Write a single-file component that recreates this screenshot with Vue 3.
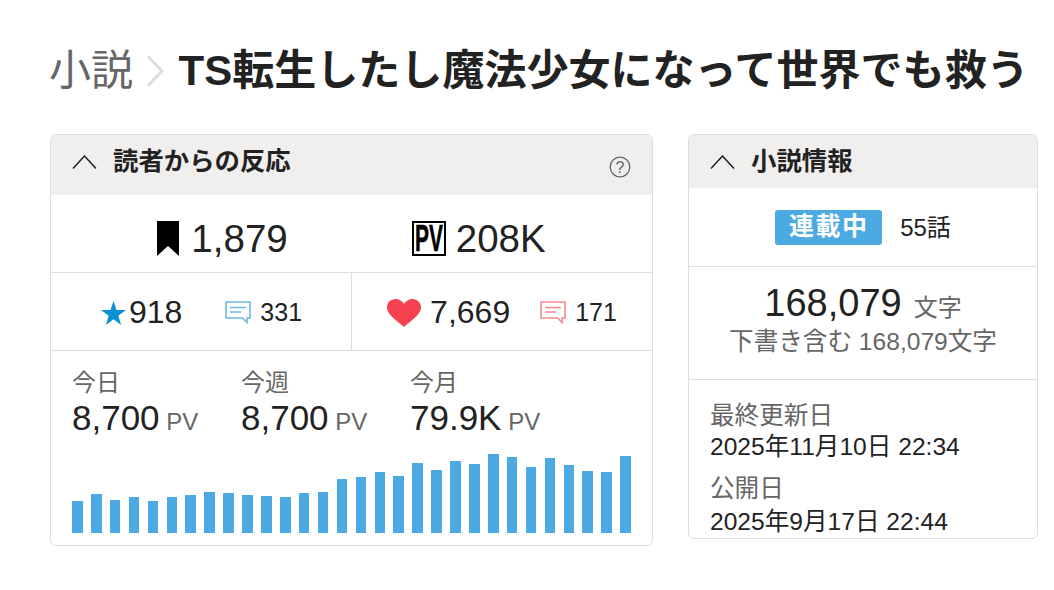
<template>
  <div class="page">
    <h1 class="page-title">
      <span class="crumb">小説</span>
      <svg class="crumb-arrow" width="18" height="32" viewBox="0 0 18 32"><path d="M2 1.5 16 16 2 30.5" fill="none" stroke="#ddd" stroke-width="3" /></svg>
      <span class="novel-name">TS転生したし魔法少女になって世界でも救う</span>
    </h1>

    <div class="columns">
      <section class="card reaction-card">
        <header class="card-header reaction-header">
          <svg class="chevron" width="25" height="14" viewBox="0 0 25 14"><path d="M1 13.5 12.500 1 24 13.500" fill="none" stroke="#222" stroke-width="1.500" /></svg>
          <h2 class="card-title">読者からの反応</h2>
          <svg class="help" width="22" height="22" viewBox="0 0 22 22">
            <circle cx="11" cy="11" r="9.800" fill="none" stroke="#666" stroke-width="1.300" />
            <text x="11" y="16.500" text-anchor="middle" class="help-mark">?</text>
          </svg>
        </header>

        <div class="totals">
          <div class="total">
            <svg width="22" height="35" viewBox="0 0 22 35"><path d="M0 0H22V35L11 25 0 35Z" fill="#000" /></svg>
            <span>1,879</span>
          </div>
          <div class="total pv-total">
            <span class="pv-badge"><span>PV</span></span>
            <span>208K</span>
          </div>
        </div>

        <div class="scores">
          <div class="score">
            <svg width="25" height="24" viewBox="0 0 26 25"><path d="M13 0 16.100 9.400H26L18 15.300 21 25 13 19 5 25 8 15.300 0 9.400H9.900Z" fill="#0a90d0" /></svg>
            <span class="score-num">918</span>
            <span class="comments">
              <svg width="26" height="23" viewBox="0 0 26 23">
                <path d="M1 1H25V17H22V21.500L17.500 17H1Z" fill="none" stroke="#6cb8e6" stroke-width="1.600" />
                <path d="M5 6.500H21M5 11H16" stroke="#6cb8e6" stroke-width="1.400" />
              </svg>
              331
            </span>
          </div>
          <div class="score">
            <svg width="34" height="28" viewBox="0 0 34 28"><path d="M17 28C13 24 0 16 0 8.500 0 3.500 4 0 8.500 0 12 0 15.500 2 17 5 18.500 2 22 0 25.500 0 30 0 34 3.500 34 8.500 34 16 21 24 17 28Z" fill="#f5404f" /></svg>
            <span class="score-num heart-num">7,669</span>
            <span class="comments">
              <svg width="26" height="23" viewBox="0 0 26 23">
                <path d="M1 1H25V17H22V21.500L17.500 17H1Z" fill="none" stroke="#f58a8f" stroke-width="1.600" />
                <path d="M5 6.500H21M5 11H16" stroke="#f58a8f" stroke-width="1.400" />
              </svg>
              171
            </span>
          </div>
        </div>

        <div class="pv-block">
          <div class="pv-stats">
            <div v-for="stat in pvStats" :key="stat.label" class="pv-stat">
              <div class="pv-label">{{ stat.label }}</div>
              <div class="pv-value">{{ stat.value }}<small> PV</small></div>
            </div>
          </div>
          <div class="chart">
            <div v-for="(h, i) in bars" :key="i" class="bar" :style="{ height: h + 'px' }"></div>
          </div>
        </div>
      </section>

      <section class="card info-card">
        <header class="card-header info-header">
          <svg class="chevron" width="25" height="14" viewBox="0 0 25 14"><path d="M1 13.5 12.500 1 24 13.500" fill="none" stroke="#222" stroke-width="1.500" /></svg>
          <h2 class="card-title">小説情報</h2>
        </header>

        <div class="status-row">
          <span class="status-badge">連載中</span>
          <span>55話</span>
        </div>

        <div class="length-row">
          <div class="length"><strong>168,079</strong><span>文字</span></div>
          <div class="draft">下書き含む 168,079文字</div>
        </div>

        <div class="dates">
          <div class="date-label">最終更新日</div>
          <div class="date-value">2025年11月10日 22:34</div>
          <div class="date-label second">公開日</div>
          <div class="date-value last">2025年9月17日 22:44</div>
        </div>
      </section>
    </div>
  </div>
</template>

<script setup>
const pvStats = [
  { label: '今日', value: '8,700' },
  { label: '今週', value: '8,700' },
  { label: '今月', value: '79.9K' }
];

// 直近30日の棒の高さ
const bars = [32, 39, 33, 36, 32, 36, 38, 41, 40, 38, 37, 36, 40, 41, 54, 56, 61, 57, 70, 63, 72, 69, 79, 76, 66, 75, 68, 62, 61, 77];
</script>

<style>
html, body { margin: 0; background: #fff; }
</style>

<style scoped>
.page { width: 1054px; height: 590px; overflow: hidden; box-sizing: border-box; padding: 46px 16px 0 50px; color: #222; font-family: "Liberation Sans", "Noto Sans CJK JP", sans-serif; }

.page-title { display: flex; align-items: center; margin: 0; height: 50px; font-size: 42px; line-height: 50px; font-weight: 400; white-space: nowrap; }
.crumb { color: #666; margin-left: -1px; }
.crumb-arrow { margin: 0 14.500px 0 13px; flex: none; }
.novel-name { font-weight: 700; font-size: 42.040px; }

.columns { display: flex; align-items: flex-start; gap: 35px; margin-top: 38px; }
.card { box-sizing: border-box; border: 1px solid #ddd; border-radius: 6px; overflow: hidden; background: #fff; }
.reaction-card { width: 603px; height: 412px; }
.info-card { width: 350px; height: 405px; }

.card-header { display: flex; background: #f1efee; padding-left: 20.500px; position: relative; box-sizing: border-box; padding-top: 12px; }
.reaction-header { height: 60px; }
.info-header { height: 53px; }
.card-title { margin: 0 0 0 16.500px; font-size: 25.400px; line-height: 28px; font-weight: 700; }
.chevron { margin-top: 8px; }
.help { position: absolute; right: 21px; top: 21px; }
.help-mark { font-size: 16px; fill: #666; }

.totals { display: flex; justify-content: center; gap: 124px; box-sizing: border-box; height: 78px; padding-top: 10px; align-items: center; border-bottom: 1px solid #ddd; font-size: 38.500px; }
.total { display: flex; align-items: center; gap: 12px; }
.pv-total { gap: 10px; }
.pv-badge { display: flex; align-items: center; justify-content: center; box-sizing: border-box; width: 34px; height: 35px; border: 2px solid #000; }
.pv-badge span { flex: none; font-size: 36px; line-height: 31px; font-weight: 700; color: #000; transform: scaleX(.58); -webkit-text-stroke: .6px #000; }

.scores { display: flex; box-sizing: border-box; height: 78px; border-bottom: 1px solid #ddd; }
.score { box-sizing: border-box; flex: 1; display: flex; align-items: center; justify-content: center; padding-top: 2px; }
.score:first-child { flex: none; width: 300px; padding-left: 1px; }
.score + .score { border-left: 1px solid #ddd; }
.score-num { font-size: 32px; margin-left: 3px; }
.heart-num { margin-left: 9px; }
.comments { display: flex; align-items: center; gap: 9px; margin-left: 43px; font-size: 25px; }
.comments svg { flex: none; }
.heart-num + .comments { margin-left: 30px; }

.pv-block { padding: 18px 21px 0; }
.pv-stats { display: flex; }
.pv-stat { width: 169px; }
.pv-label { font-size: 24px; line-height: 28px; color: #666; }
.pv-value { font-size: 35px; line-height: 42px; white-space: nowrap; }
.pv-value small { font-size: 24px; color: #666; }
.chart { display: flex; align-items: flex-end; gap: 8.3px; height: 80px; margin-top: 10px; width: 559px; }
.bar { flex: 1; background: #4caae2; }

.status-row { display: flex; justify-content: center; align-items: center; gap: 18px; box-sizing: border-box; height: 79px; padding-bottom: 4px; border-bottom: 1px solid #ddd; font-size: 24px; }
.status-badge { box-sizing: border-box; width: 107px; height: 35px; line-height: 32px; margin-top: 4px; text-align: center; border-radius: 3px; background: #4caae2; color: #fff; font-size: 25px; font-weight: 700; letter-spacing: 1.500px; }

.length-row { height: 113px; box-sizing: border-box; padding-top: 13px; border-bottom: 1px solid #ddd; text-align: center; }
.length { font-size: 24px; line-height: 46px; color: #666; }
.length strong { font-size: 38px; font-weight: 400; color: #222; }
.length span { margin-left: 12px; }
.draft { font-size: 24.600px; line-height: 22px; color: #666; }

.dates { padding: 21px 21px 0; }
.date-label { font-size: 24.600px; line-height: 30px; color: #666; }
.date-value { font-size: 24.600px; line-height: 32px; white-space: nowrap; }
.second { margin-top: 11px; }
.last { margin-top: 2px; }
</style>
